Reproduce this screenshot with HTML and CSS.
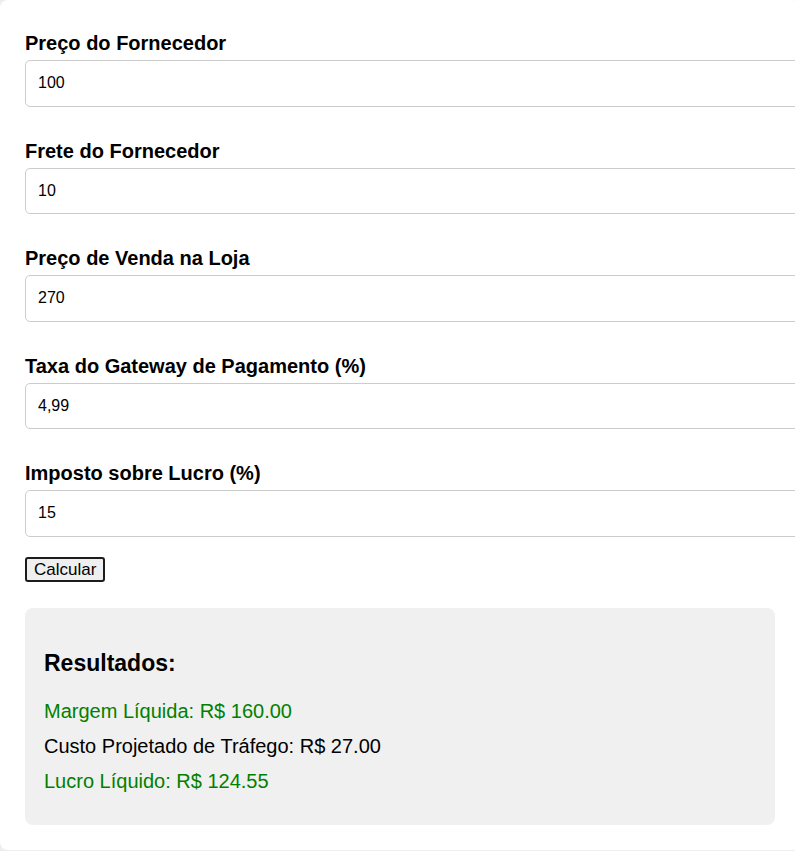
FILE: index.html
```html
<!DOCTYPE html>
<html lang="pt-BR">
<head>
<meta charset="utf-8">
<title>Calculadora</title>
<link rel="stylesheet" href="styles.css">
</head>
<body>
<div class="container">
  <div class="field">
    <label class="label" for="f1">Preço do Fornecedor</label>
    <input class="input" id="f1" type="text" value="100">
  </div>
  <div class="field">
    <label class="label" for="f2">Frete do Fornecedor</label>
    <input class="input" id="f2" type="text" value="10">
  </div>
  <div class="field">
    <label class="label" for="f3">Preço de Venda na Loja</label>
    <input class="input" id="f3" type="text" value="270">
  </div>
  <div class="field">
    <label class="label" for="f4">Taxa do Gateway de Pagamento (%)</label>
    <input class="input" id="f4" type="text" value="4,99">
  </div>
  <div class="field last">
    <label class="label" for="f5">Imposto sobre Lucro (%)</label>
    <input class="input" id="f5" type="text" value="15">
  </div>
  <button class="btn" type="button">Calcular</button>
  <div class="results">
    <h3 class="results-title">Resultados:</h3>
    <p class="line positive">Margem Líquida: R$ 160.00</p>
    <p class="line">Custo Projetado de Tráfego: R$ 27.00</p>
    <p class="line positive">Lucro Líquido: R$ 124.55</p>
  </div>
</div>
</body>
</html>
```

FILE: styles.css
```css
html, body {
  overflow-x: hidden;
}
body {
  margin: 0;
  min-height: 851px;
  background: #eeeeee;
  font-family: "Liberation Sans", Arial, sans-serif;
  color: #000;
}
.container {
  width: 750px;
  padding: 32px 25px 25px;
  background: #fff;
  border-radius: 8px;
}
.field {
  margin-bottom: 33px;
}
.field.last {
  margin-bottom: 20px;
}
.label {
  display: block;
  font-size: 20px;
  font-weight: bold;
  margin-bottom: 5px;
}
.input {
  display: block;
  width: 100%;
  margin: 0;
  padding: 13px 12px;
  font-family: "Liberation Sans", Arial, sans-serif;
  font-size: 16px;
  line-height: 18.5px;
  color: #000;
  border: 1px solid #cccccc;
  border-radius: 5px;
  background: #fff;
  outline: none;
}
.btn {
  display: block;
  font-family: "Liberation Sans", Arial, sans-serif;
  font-size: 17px;
  line-height: 19px;
  padding: 1px 7px;
  background: #efefef;
  border: 2px solid #1c1c1c;
  border-radius: 3px;
  color: #000;
}
.results {
  margin-top: 26px;
  padding: 20px 19px;
  background: #f0f0f0;
  border-radius: 8px;
}
.results-title {
  font-size: 23px;
  font-weight: bold;
  margin: 22px 0 23px;
}
.line {
  font-size: 20px;
  margin: 12px 0;
}
.positive {
  color: #008000;
}
```
